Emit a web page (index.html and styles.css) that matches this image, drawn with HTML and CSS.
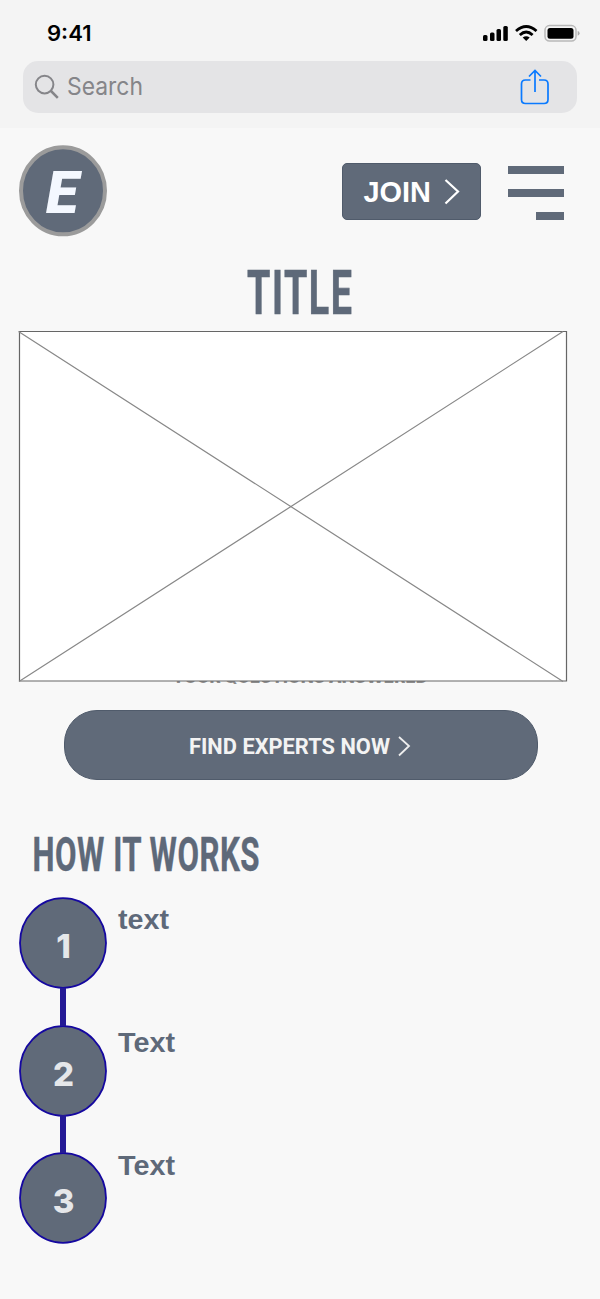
FILE: index.html
```html
<!DOCTYPE html>
<html lang="en">
<head>
<meta charset="utf-8">
<title>Experts</title>
<link rel="stylesheet" href="styles.css">
</head>
<body>
<div class="browser">
  <div class="status">
    <svg class="time" width="60" height="24"><text x="2" y="19.500" textLength="44.500" lengthAdjust="spacingAndGlyphs">9:41</text></svg>
    <svg class="signals" width="100" height="20" viewBox="0 0 100 20">
      <g fill="#000"><rect x="3" y="11" width="4.500" height="6" rx="1.500"/><rect x="10" y="8.500" width="4.500" height="8.500" rx="1.500"/><rect x="16.500" y="5" width="4.500" height="12" rx="1.500"/><rect x="23.300" y="2" width="4.500" height="15" rx="1.500"/></g>
      <g fill="none" stroke="#000" stroke-width="2.800"><path d="M36 7Q46.200-2 56.500 7"/><path d="M39.800 11Q46.200 5 52.600 11"/></g>
      <path d="M42.700 13.500Q46.200 10.800 49.700 13.500L46.200 17Z"/>
      <rect x="65" y="1.600" width="31" height="15.500" rx="4.500" fill="none" stroke="#b8b8b8" stroke-width="1.500"/>
      <rect x="67.500" y="4" width="26" height="10.700" rx="2.500"/>
      <path d="M97.700 7Q99.600 7.500 99.600 9.300T97.700 11.700Z" fill="#aaa"/>
    </svg>
  </div>
  <div class="search">
    <svg width="26" height="26" fill="none" stroke="#858589" stroke-width="2"><circle cx="9.600" cy="10.600" r="8.800"/><path d="M16 17l6.800 6.800" stroke-width="2.500"/></svg>
    <svg class="query" width="90" height="32"><text x="0" y="23.700" textLength="76" lengthAdjust="spacingAndGlyphs">Search</text></svg>
    <svg class="share" width="30" height="36" fill="none" stroke="#0a7aff" stroke-width="1.700"><path d="M10.500 11H5.500Q1.500 11 1.500 15V30.500Q1.500 34.500 5.500 34.500H24Q28 34.500 28 30.500V15Q28 11 24 11H19"/><path d="M15 23V2M9 7.500L15 1.500L21 7.500"/></svg>
  </div>
</div>
<header class="header">
  <svg class="logo" width="88" height="92"><ellipse cx="44" cy="45.800" rx="42" ry="43.500"/><text x="27" y="68" textLength="32.500" lengthAdjust="spacingAndGlyphs">E</text></svg>
  <div class="join">
    <svg width="139" height="57"><text x="21.500" y="38.500" textLength="67.500" lengthAdjust="spacingAndGlyphs">JOIN</text><path d="M103.500 17L116 28.500L103.500 40.500" fill="none" stroke="#fff" stroke-width="2.200"/></svg>
  </div>
  <div class="menu"><i></i><i></i><i class="short"></i></div>
</header>
<main>
  <h1 class="title"><svg width="600" height="70"><text x="247" y="53.300" textLength="106.500" lengthAdjust="spacingAndGlyphs">TITLE</text></svg></h1>
  <svg class="picture" width="549" height="353"><path class="frame" d="M1.500 1.500H548.500V351H1.500Z"/><path class="cross" d="M.5 1.500L545 351.500M1 351.500L545 1.500"/></svg>
  <p class="tagline"><svg width="600" height="30"><text x="172" y="21" textLength="256" lengthAdjust="spacingAndGlyphs">YOUR QUESTIONS ANSWERED</text></svg></p>
  <div class="find"><svg width="474" height="70"><text x="125" y="44" textLength="201" lengthAdjust="spacingAndGlyphs">FIND EXPERTS NOW</text><path d="M335 27L345 36L335 45.500" fill="none" stroke="#eee" stroke-width="1.800"/></svg></div>
  <h2 class="how"><svg width="290" height="64"><text x="22.500" y="44.300" textLength="227.500" lengthAdjust="spacingAndGlyphs">HOW IT WORKS</text></svg></h2>
  <ol class="steps">
    <li><svg class="num" width="88" height="92"><ellipse cx="44" cy="46" rx="43" ry="44.800"/><text x="44.500" y="60.500">1</text></svg><svg class="label" width="90" height="50"><text x="0" y="31.500" textLength="51" lengthAdjust="spacingAndGlyphs">text</text></svg></li>
    <li><svg class="num" width="88" height="92"><ellipse cx="44" cy="46" rx="43" ry="44.800"/><text x="44.500" y="60.500">2</text></svg><svg class="label" width="90" height="50"><text x="0" y="26.800" textLength="57" lengthAdjust="spacingAndGlyphs">Text</text></svg></li>
    <li><svg class="num" width="88" height="92"><ellipse cx="44" cy="46" rx="43" ry="44.800"/><text x="44.500" y="60.500">3</text></svg><svg class="label raised" width="90" height="60"><text x="0" y="33" textLength="57" lengthAdjust="spacingAndGlyphs">Text</text></svg></li>
  </ol>
</main>
</body>
</html>
```
FILE: styles.css
```css
* { box-sizing: border-box; }
body { margin: 0; width: 600px; height: 1299px; background: #f8f8f8; font-family: Roboto, "Liberation Sans", sans-serif; overflow: hidden; }
svg { display: block; flex: none; overflow: visible; }
h1, h2, p, ol { margin: 0; padding: 0; }
.browser { height: 128px; background: #f4f4f4; padding-top: 21px; }
.status { height: 40px; padding: 0 20px 0 45px; display: flex; justify-content: space-between; }
.time { font: 600 21px Inter, sans-serif; }
.signals { margin-top: 3px; }
.search { margin: 0 23px; height: 52px; border-radius: 15px; background: #e4e4e6; display: flex; align-items: center; padding: 0 27px 0 12px; }
.query { margin-left: 6px; font: 400 24.5px Inter, sans-serif; fill: #858589; }
.share { margin-left: auto; }
.header { display: flex; padding: 17px 36px 0 19px; height: 129px; }
.logo ellipse { fill: #606a79; stroke: #9b9b9b; stroke-width: 4; }
.logo text { font: italic 900 58.5px Roboto, sans-serif; fill: #f4f8ff; }
.join { margin: 18px 27px 0 auto; width: 139px; height: 57px; border-radius: 5px; background: #606a79; border: 1px solid #505b6b; }
.join svg { margin: -1px; }
.join text { font: bold 29.5px "Liberation Sans", sans-serif; fill: #fff; }
.menu { width: 56px; padding-top: 21px; display: flex; flex-direction: column; align-items: flex-end; gap: 15px; }
.menu i { width: 56px; height: 8px; background: #606a79; }
.menu .short { width: 28px; }
.title { height: 73px; padding-top: 4px; }
.title text { font: bold 62px Roboto, sans-serif; letter-spacing: 2.5px; fill: #5e6979; stroke: #5e6979; stroke-width: .6; }
.picture { position: relative; z-index: 1; margin-left: 18px; }
.frame { fill: #fff; stroke: #666; stroke-width: 1.2; }
.cross { fill: none; stroke: #888; stroke-width: 1.2; }
.tagline { height: 28px; margin-top: -21px; }
.tagline text { font: 800 20px Inter, sans-serif; fill: #8c8c8c; }
.find { margin: 20px 0 0 64px; width: 474px; height: 70px; border-radius: 33px; background: #606a79; border: 1px solid #505b6b; }
.find svg { margin: -1px; }
.find text { font: bold 22px Roboto, sans-serif; fill: #f3f3f3; }
.how { margin: 47px 0 0 10px; height: 70px; }
.how text { font: bold 48.5px Roboto, sans-serif; letter-spacing: .8px; fill: #5e6979; stroke: #5e6979; stroke-width: .4; }
.steps { list-style: none; margin-left: 19px; display: flex; flex-direction: column; gap: 35.5px; }
.steps li { display: flex; position: relative; gap: 11px; }
.steps li + li::before { content: ""; position: absolute; left: 41px; top: -37px; width: 6px; height: 38px; background: #241a96; }
.num ellipse { fill: #606a79; stroke: #1508a0; stroke-width: 1.8; }
.num text { font: 800 33px Inter, sans-serif; fill: #e5e7ea; text-anchor: middle; }
.label text { font: bold 28px "Liberation Sans", sans-serif; fill: #5e6979; }
.label.raised { margin-top: -10px; }
```
